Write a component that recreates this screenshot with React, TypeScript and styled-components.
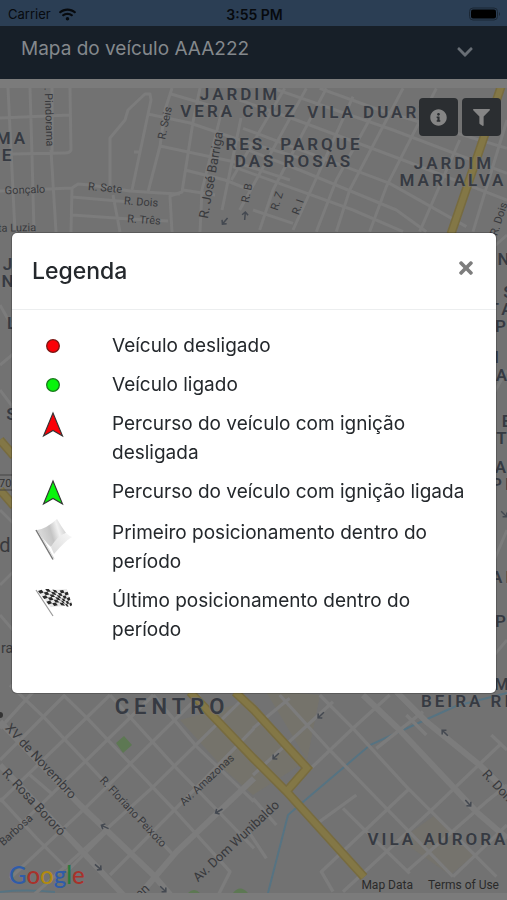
import React from 'react';
import styled, { createGlobalStyle } from 'styled-components';
import { FaChevronDown, FaFilter, FaInfoCircle, FaTimes, FaWifi } from 'react-icons/fa';

const GlobalStyle = createGlobalStyle`
  * { box-sizing: border-box; }
  body { margin: 0; background: #7b7b7b; font-family: Inter, "Liberation Sans", sans-serif; }
  button { font: inherit; border: 0; cursor: pointer; }
`;

const Page = styled.div`
  display: flex;
  flex-direction: column;
  min-height: 100vh;
`;

const StatusBar = styled.div`
  display: grid;
  grid-template-columns: 1fr auto 1fr;
  align-items: center;
  height: 26px;
  padding: 2px 6px 0 8px;
  background: #2b3e54;
  color: #070a0e;
  font-size: 13px;
`;

const Carrier = styled.span`
  display: flex;
  align-items: center;
  gap: 8px;
`;

const Clock = styled.span`
  font-size: 14px;
  font-weight: 600;
`;

const BatterySlot = styled.span`
  display: flex;
  justify-content: flex-end;
`;

const TitleBar = styled.header`
  display: flex;
  justify-content: space-between;
  align-items: center;
  height: 53px;
  padding: 0 33px 8px 21px;
  background: #171f28;
`;

const PageTitle = styled.h1`
  margin: 0;
  color: #84888c;
  font-size: 19px;
  font-weight: 400;
`;

const ToggleButton = styled.button`
  display: flex;
  padding: 6px 0 0;
  background: none;
  color: #686e75;
  font-size: 18px;
`;

const MapFrame = styled.main`
  position: relative;
  display: flex;
  flex: 1;
  margin: 9px 0 7px;
  background: #727272;
  overflow: hidden;
`;

const MapDrawing = styled.svg`
  flex: 1;
  min-width: 0;
  height: calc(100vh - 95px);
  font-family: Roboto, sans-serif;
`;

const MapControls = styled.div`
  position: absolute;
  top: 10px;
  right: 6px;
  display: flex;
  gap: 4px;
`;

const MapButton = styled.button`
  display: flex;
  align-items: center;
  justify-content: center;
  width: 39px;
  height: 38px;
  padding: 0;
  border-radius: 4px;
  background: #2b2e31;
  color: #858585;
  font-size: 17px;
`;

const MapFooter = styled.footer`
  position: absolute;
  right: 8px;
  bottom: 0;
  left: 9px;
  display: flex;
  align-items: flex-end;
  justify-content: space-between;
`;

const Logo = styled.span`
  font-family: Lato, "Open Sans", sans-serif;
  font-size: 24px;
  font-weight: 500;
  line-height: 36px;
`;

const LogoLetter = styled.span<{ $color: string }>`
  color: ${(p) => p.$color};
`;

const FooterLinks = styled.nav`
  display: flex;
  gap: 15px;
`;

const FooterLink = styled.a`
  color: #2a2a2a;
  font-family: Roboto, sans-serif;
  font-size: 12px;
  line-height: 16px;
  text-decoration: none;
`;

const Overlay = styled.div`
  position: fixed;
  inset: 0;
  display: flex;
  align-items: center;
  padding: 25px 11px 0 12px;
`;

const Dialog = styled.section`
  flex: 1;
  border-radius: 5px;
  background: #fff;
  box-shadow: 0 0 0 1px rgba(0, 0, 0, 0.2);
  color: #24282c;
`;

const DialogHeader = styled.div`
  display: flex;
  align-items: center;
  justify-content: space-between;
  height: 77px;
  padding: 0 20px;
  border-bottom: 1px solid #eceeef;
`;

const DialogTitle = styled.h2`
  margin: 0;
  font-size: 23px;
  font-weight: 500;
`;

const CloseButton = styled.button`
  display: flex;
  padding: 0 0 6px;
  background: none;
  color: #7d7d7d;
  font-size: 20px;
`;

const LegendList = styled.ul`
  display: flex;
  flex-direction: column;
  gap: 10px;
  margin: 0;
  padding: 21px 20px 49px;
  list-style: none;
`;

const LegendRow = styled.li`
  display: grid;
  grid-template-columns: 42px 1fr;
  column-gap: 38px;
  align-items: start;
`;

const LegendIcon = styled.span`
  display: flex;
  justify-content: center;
`;

const LegendText = styled.span`
  font-size: 19px;
  line-height: 29px;
`;

const Dot = ({ fill, stroke }: { fill: string; stroke: string }) => (
  <svg width="16" height="29" viewBox="0 0 16 29" aria-hidden="true">
    <circle cx="8" cy="15" r="6.3" fill={fill} stroke={stroke} strokeWidth="1.3" />
  </svg>
);

const Arrow = ({ fill }: { fill: string }) => (
  <svg width="24" height="31" viewBox="0 0 24 31" aria-hidden="true">
    <path d="M12 4 L21.5 27 L12 21.5 L2.5 27 Z" fill={fill} stroke="#333" strokeWidth="1.1" />
  </svg>
);

const WhiteFlag = () => (
  <svg width="38" height="43" viewBox="0 0 38 43" aria-hidden="true">
    <defs>
      <linearGradient id="cloth" x1="0" y1="0.5" x2="1" y2="0.2">
        <stop offset="0" stopColor="#dedede" />
        <stop offset="0.45" stopColor="#c4c4c4" />
        <stop offset="0.7" stopColor="#f1f1f1" />
        <stop offset="1" stopColor="#c8c8c8" />
      </linearGradient>
      <linearGradient id="fold" x1="0" y1="1" x2="1" y2="0">
        <stop offset="0" stopColor="#dadada" />
        <stop offset="1" stopColor="#f8f8f8" />
      </linearGradient>
    </defs>
    <path d="M3 12 Q12 11 23 1 Q27 8 32 15 Q24 19 17 29 Q11 24 3 12Z" fill="url(#cloth)" />
    <path d="M17 29 Q23 18 32 15 Q35 18 38 19 Q31 23 20 36 Z" fill="url(#fold)" />
    <path d="M2 12 L19 41.5" stroke="#777" strokeWidth="1.5" />
    <path d="M3.5 12 L20 40.5" stroke="#c4c4c4" strokeWidth="0.7" />
  </svg>
);

const checkRows = [0, 1, 2, 3, 4, 5];
const checkCols = [0, 1, 2, 3, 4, 5, 6, 7];

const cornerOf = (col: number, row: number) => {
  const x = 4 + col * 3.6 + row * 2.1 - (col > 4 ? row * (col - 4) * 0.3 : 0);
  const y = 5 + row * 2.7 - Math.sin(col * 0.75) * 1.4 - col * 0.3;
  return `${x} ${y}`;
};

const CheckeredFlag = () => (
  <svg width="38" height="31" viewBox="0 0 38 31" aria-hidden="true">
    <path d={`M${cornerOf(0, 0)} L${cornerOf(8, 0)} L${cornerOf(8, 6)} L${cornerOf(0, 6)}Z`} fill="#e9e9e9" />
    {checkRows.flatMap((r) =>
      checkCols
        .filter((c) => (c + r) % 2 === 0)
        .map((c) => (
          <path
            key={`${r}-${c}`}
            d={`M${cornerOf(c, r)} L${cornerOf(c + 1, r)} L${cornerOf(c + 1, r + 1)} L${cornerOf(c, r + 1)}Z`}
            fill="#292929"
          />
        )),
    )}
    <path d="M2 4 L19 30" stroke="#999" strokeWidth="1.2" />
  </svg>
);

const legend = [
  { icon: <Dot fill="#fb0007" stroke="#7a1512" />, text: 'Veículo desligado' },
  { icon: <Dot fill="#08f40c" stroke="#187a1b" />, text: 'Veículo ligado' },
  { icon: <Arrow fill="#fb0007" />, text: 'Percurso do veículo com ignição desligada' },
  { icon: <Arrow fill="#08f40c" />, text: 'Percurso do veículo com ignição ligada' },
  { icon: <WhiteFlag />, text: 'Primeiro posicionamento dentro do período' },
  { icon: <CheckeredFlag />, text: 'Último posicionamento dentro do período' },
];

type Label = [text: string, x: number, y: number, size?: number];

const districts: Label[] = [
  ['JARDIM', 240, 100],
  ['VERA CRUZ', 239, 117],
  ['VILA DUARTE', 376, 118],
  ['RES. PARQUE', 294, 150],
  ['DAS ROSAS', 294, 167],
  ['JARDIM', 454, 169],
  ['MARIALVA', 453, 186],
  ['MA', 12, 144],
  ['E', 8, 161],
  ['J', 9, 270],
  ['N', 9, 287],
  ['L', 13, 329],
  ['S', 13, 420],
  ['N', 505, 265],
  ['S', 510, 298],
  ['TA', 502, 315],
  ['P', 502, 332],
  ['M', 493, 363],
  ['A', 503, 381],
  ['E', 508, 427],
  ['T', 503, 444],
  ['A', 502, 473],
  ['PI', 502, 490],
  ['AI', 502, 583],
  ['P', 502, 627],
  ['M', 503, 690],
  ['BEIRA RIO', 474, 707],
  ['CENTRO', 172, 714, 22],
  ['VILA AURORA', 438, 845],
];

type Street = [text: string, x: number, y: number, angle: number, size: number];

const streets: Street[] = [
  ['. Pindorama', 49, 117, 88, 11],
  ['R. Seis', 165, 123, -78, 11],
  ['R. José Barriga', 211, 175, -80, 13],
  ['R. B', 247, 193, -78, 11],
  ['R. Z', 277, 201, -72, 11],
  ['R. I', 298, 207, -70, 11],
  ['Gonçalo', 25, 190, -2, 11],
  ['R. Sete', 105, 188, 5, 11],
  ['R. Dois', 141, 202, 4, 11],
  ['R. Três', 144, 220, 4, 11],
  ['nta Luzia', 14, 228, -1, 11],
  ['R. Dois', 499, 219, -72, 11],
  ['XV de Novembro', 41, 761, 47, 13],
  ['R. Rosa Bororó', 34, 802, 47, 13],
  ['Barbosa', 16, 830, -42, 11],
  ['R. Floriano Peixoto', 133, 812, 47, 11],
  ['Av. Amazonas', 207, 780, -43, 11],
  ['Av. Dom Wunibaldo', 236, 841, -43, 13],
  ['R. Dom', 499, 787, 47, 13],
  ['en', 142, 891, -43, 13],
  ['ra', 7, 648, 0, 14],
  ['d', 5, 545, 0, 20],
];

const Roads = () => (
  <g fill="none" stroke="#7c7c7c" strokeWidth="3" strokeLinejoin="round">
    <path d="M8 88L15 232 M30 88L32 155L34 232 M51 150L56 232 M52 88V154 M70 88L71 150Q70 153 65 153L12 154 M0 118L70 115 M0 191L72 188L78 184L90 185L130 191L160 193L180 194 M72 188L71 232 M72 197L130 202 M72 215L130 219L168 221 M113 195L120 232" />
    <path d="M110 190V138L125 120L128 110L145 94H150L151 100L132 190 M134 152H140 M148 192L160 146L165 110L172 88 M148 114L190 123L240 140L300 158 M160 146L235 162L290 180 M171 94L215 107 M200 88L193 122L182 192L170 196L172 232 M185 170L225 180L250 190 M183 190L215 195 M241 118L222 210 M222 110L202 190L200 232" />
    <g transform="translate(253 80) scale(.333333)" strokeWidth="9">
      <path d="M60 25L420 150L762 280 M-40 60L130 120L450 240L762 360 M-30 145L410 310L640 440 M-40 200L140 270L430 390L520 455 M-60 260L300 390L450 455 M200 25L380 90L762 205 M0 390L120 430" />
      <path d="M220 25L60 330L20 450 M300 50L120 450 M360 100L250 300L190 455 M450 25L290 330L250 455 M550 25L400 320L350 455 M620 180L500 455 M762 120L660 455 M160 25L-40 390 M95 25L-65 300" />
    </g>
    <path d="M0 305L14 330 M0 365L30 340 M0 390L30 430 M0 510L30 540 M0 585L30 555 M0 615L30 650 M490 250L507 235 M490 400L507 370 M490 570L507 530 M490 660L507 640" />
    <g transform="translate(0 685) scale(.333333)" strokeWidth="10">
      <path d="M30 0L130 95L262 235L520 510 M190 30L262 100L523 375L690 560L650 640 M330 30L525 245L762 490 M460 30L590 185L762 350 M0 340L110 460L200 550 M0 225L195 30 M0 350L330 30 M40 440L460 30 M30 580L255 370L600 30 M90 640L460 305L720 50 M200 560L320 440 M330 570L523 375L762 130 M0 130L100 20 M90 270L160 330" />
      <path strokeWidth="18" d="M0 110L240 360L460 570L520 640 M0 240L200 450L370 630 M410 640L530 500L762 280" />
    </g>
    <g transform="translate(253 685) scale(.333333)" strokeWidth="10">
      <path d="M80 30L230 195L400 370L600 575 M200 30L300 130L460 305L730 575 M0 270L240 50 M0 130L110 40 M100 320L300 130L410 30 M200 410L310 330 M240 620L205 560L470 310 M270 620L530 380L740 180 M370 190L510 80 M460 560L700 350L762 300 M460 90L520 150 M0 340L70 420 M-20 430L40 520 M270 370L340 440L470 565 M715 150L762 195 M600 575L762 420" />
      <path strokeWidth="18" d="M330 30L440 135L670 380L762 460 M430 20L520 110L680 240L762 320" />
    </g>
  </g>
);

const highwayPath =
  'M502 84L451 234 M190 692L253 758L287 792L364 877 M235 692L254 710L307 768L286 792 M0 440L14 456 M0 490L14 506';

const Highways = () => (
  <>
    <path d={highwayPath} fill="none" stroke="#776b3f" strokeWidth="9" />
    <path d={highwayPath} fill="none" stroke="#837746" strokeWidth="6" />
    <path d="M0 475H14 M0 490H14" stroke="#454545" strokeWidth="1" />
    <text x="-1" y="487" fontSize="11" fill="#333">70</text>
  </>
);

const oneWays: [number, number, number][] = [
  [225, 221, 130], [245, 216, -85], [219, 811, 150], [105, 827, 205], [98, 867, 40],
  [163, 889, 45], [321, 715, 137], [276, 756, 137], [445, 733, 225], [468, 803, 48], [504, 514, 45],
];

const CityMap = () => (
  <MapDrawing viewBox="0 88 507 805" preserveAspectRatio="xMidYMid slice" role="img" aria-label="Mapa">
    <rect y="88" width="507" height="805" fill="#727272" />
    <g fill="#787467">
      <path d="M180 720L253 700L300 765L253 795L225 770Z" opacity=".6" />
      <path d="M265 690L320 695L307 760Z" opacity=".6" />
      <path d="M400 840L435 815L475 855L450 875Z" opacity=".5" />
    </g>
    <path d="M116 743L124 736L132 745L123 753Z M233 893Q240 884 248 893Z M188 893Q194 887 200 893Z" fill="#5d7853" />
    <path d="M507 693L456 706L403 730L370 745L303 802L288 815L268 893 M0 892Q25 889 55 892" fill="none" stroke="#567382" strokeWidth="2" />
    <Roads />
    <Highways />
    <circle cx="0" cy="715" r="3" fill="#333" />
    <g fill="none" stroke="#444951" strokeWidth="1.5">
      {oneWays.map(([x, y, a]) => (
        <path key={`${x}-${y}`} d="M-4 0H4M1 -3L4 0L1 3" transform={`translate(${x} ${y}) rotate(${a})`} />
      ))}
    </g>
    <g fill="#38393c" textAnchor="middle">
      {streets.map(([text, x, y, a, size]) => (
        <text key={`${text}-${x}`} transform={`translate(${x} ${y}) rotate(${a})`} fontSize={size} dominantBaseline="central">
          {text}
        </text>
      ))}
    </g>
    <g fill="#363a42" stroke="#767676" strokeWidth="1" paintOrder="stroke" fontWeight="600" textAnchor="middle">
      {districts.map(([text, x, y, size = 17]) => (
        <text key={`${text}-${x}-${y}`} x={x} y={y} fontSize={size} letterSpacing={size > 17 ? 5 : 3}>
          {text}
        </text>
      ))}
    </g>
  </MapDrawing>
);

const Battery = () => (
  <svg width="32" height="14" viewBox="0 0 32 14" aria-hidden="true">
    <rect x="0.5" y="1" width="28" height="12" rx="3.5" fill="none" stroke="#1b2734" />
    <rect x="2" y="2.5" width="25" height="9" rx="2" fill="#000" />
    <path d="M30 5Q32 7 30 9Z" fill="#1b2734" />
  </svg>
);

const logoLetters: [string, string][] = [
  ['G', '#2f5ca8'], ['o', '#a8322b'], ['o', '#b18a10'], ['g', '#2f5ca8'], ['l', '#257b3d'], ['e', '#a8322b'],
];

export default function App() {
  return (
    <>
      <GlobalStyle />
      <Page>
        <StatusBar>
          <Carrier>Carrier <FaWifi size={17} /></Carrier>
          <Clock>3:55 PM</Clock>
          <BatterySlot><Battery /></BatterySlot>
        </StatusBar>
        <TitleBar>
          <PageTitle>Mapa do veículo AAA222</PageTitle>
          <ToggleButton aria-label="Expandir"><FaChevronDown /></ToggleButton>
        </TitleBar>
        <MapFrame>
          <CityMap />
          <MapControls>
            <MapButton aria-label="Legenda"><FaInfoCircle /></MapButton>
            <MapButton aria-label="Filtrar"><FaFilter /></MapButton>
          </MapControls>
          <MapFooter>
            <Logo>
              {logoLetters.map(([letter, color], i) => (
                <LogoLetter key={i} $color={color}>{letter}</LogoLetter>
              ))}
            </Logo>
            <FooterLinks>
              <FooterLink href="#dados">Map Data</FooterLink>
              <FooterLink href="#termos">Terms of Use</FooterLink>
            </FooterLinks>
          </MapFooter>
        </MapFrame>
      </Page>
      <Overlay>
        <Dialog role="dialog" aria-modal="true" aria-labelledby="legend-title">
          <DialogHeader>
            <DialogTitle id="legend-title">Legenda</DialogTitle>
            <CloseButton aria-label="Fechar"><FaTimes /></CloseButton>
          </DialogHeader>
          <LegendList>
            {legend.map(({ icon, text }) => (
              <LegendRow key={text}>
                <LegendIcon>{icon}</LegendIcon>
                <LegendText>{text}</LegendText>
              </LegendRow>
            ))}
          </LegendList>
        </Dialog>
      </Overlay>
    </>
  );
}
